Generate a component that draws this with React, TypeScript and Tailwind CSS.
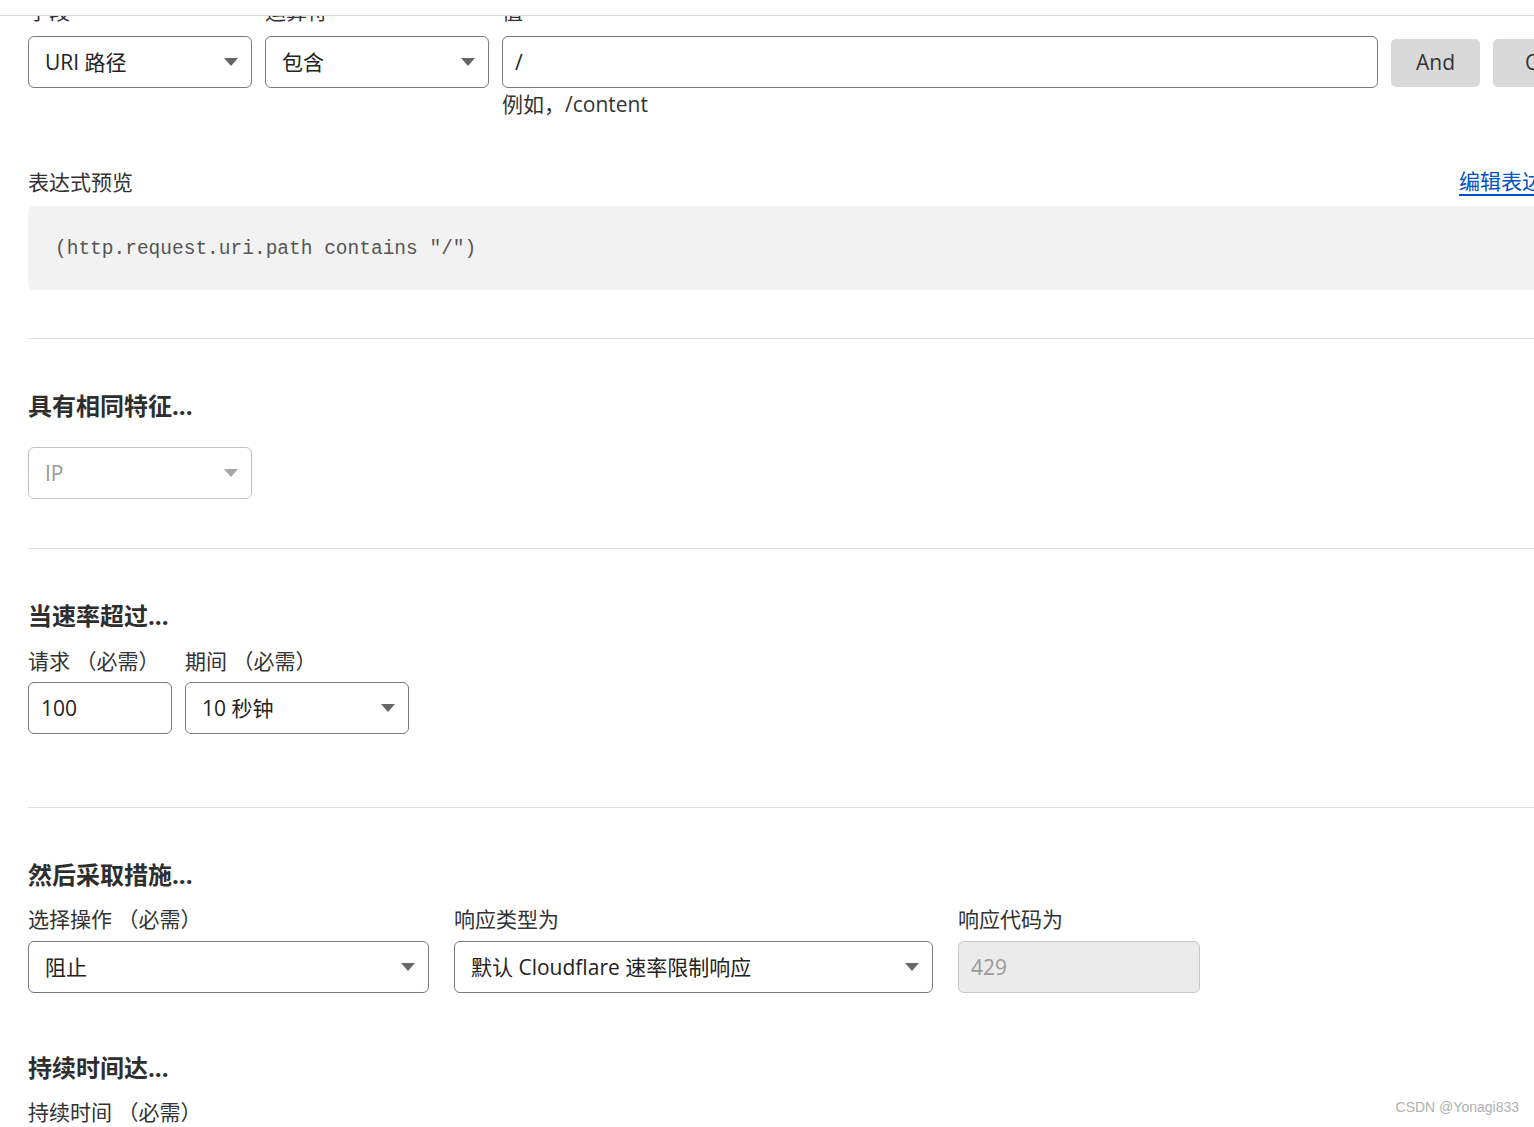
import type { ReactNode } from 'react';

const font = 'font-["Open_Sans","Noto_Sans_CJK_SC",sans-serif]';

function Caret({ muted }: { muted?: boolean }) {
  return (
    <svg width="14" height="8" viewBox="0 0 14 8" className="shrink-0">
      <path d="M0 0 L14 0 L7 8 Z" fill={muted ? '#a6a6a6' : '#666666'} />
    </svg>
  );
}

function Select({ value, width, disabled }: { value: string; width: string; disabled?: boolean }) {
  return (
    <div
      className={`${width} flex h-[52px] shrink-0 items-center justify-between rounded-[6px] border bg-white pl-[16px] pr-[13px] ${
        disabled ? 'border-[#c2c2c2] text-[#9a9a9a]' : 'border-[#7a7a7a] text-[#222]'
      }`}
    >
      <span className="whitespace-nowrap text-[21px] leading-[28px]">{value}</span>
      <Caret muted={disabled} />
    </div>
  );
}

function Input({ value, width, disabled }: { value: string; width: string; disabled?: boolean }) {
  return (
    <div
      className={`${width} flex h-[52px] shrink-0 items-center rounded-[6px] border pl-[12px] ${
        disabled ? 'border-[#c8c8c8] bg-[#ebebeb] text-[#9a9a9a]' : 'border-[#7a7a7a] bg-white text-[#222]'
      }`}
    >
      <span className="whitespace-nowrap text-[21px] leading-[28px]">{value}</span>
    </div>
  );
}

function Label({ children }: { children: ReactNode }) {
  return <div className="whitespace-nowrap text-[21px] leading-[28px] text-[#333]">{children}</div>;
}

function Heading({ children, className = '' }: { children: ReactNode; className?: string }) {
  return <h3 className={`text-[24px] font-bold leading-[30px] text-[#2e2e2e] ${className}`}>{children}</h3>;
}

function Rule({ className = '' }: { className?: string }) {
  return <div className={`h-px w-[1600px] bg-[#dedede] ${className}`} />;
}

export default function App() {
  return (
    <div className={`relative h-[1127px] w-[1534px] overflow-hidden bg-white ${font}`}>
      {/* sticky header edge covering the scrolled-away labels */}
      <div className="absolute inset-x-0 top-0 z-10 h-[16px] border-b border-[#d9d9d9] bg-white" />

      <div className="-mt-[3px] pl-[28px]">
        <div className="flex gap-[13px]">
          <div className="flex flex-col gap-[11px]">
            <Label>字段</Label>
            <Select value="URI 路径" width="w-[224px]" />
          </div>
          <div className="flex flex-col gap-[11px]">
            <Label>运算符</Label>
            <Select value="包含" width="w-[224px]" />
          </div>
          <div className="flex flex-col">
            <Label>值</Label>
            <div className="mt-[11px]">
              <Input value="/" width="w-[876px]" />
            </div>
            <div className="mt-[2px] text-[21px] leading-[28px] text-[#333]">例如，/content</div>
          </div>
          <div className="flex flex-col pt-[42px]">
            <button className="h-[48px] w-[89px] rounded-[5px] bg-[#d9d9d9] text-[21px] text-[#333]">And</button>
          </div>
          <div className="flex flex-col pt-[42px]">
            <button className="h-[48px] w-[89px] rounded-[5px] bg-[#d9d9d9] text-[21px] text-[#333]">Or</button>
          </div>
        </div>

        <div className="mt-[50px] flex w-[1600px] items-end justify-between">
          <Label>表达式预览</Label>
          <a className="mr-[64px] whitespace-nowrap border-b-2 border-[#0051c3] text-[21px] leading-[26px] text-[#0051c3]">
            编辑表达式
          </a>
        </div>
        <div className="mt-[10px] flex h-[84px] w-[1600px] items-center rounded-[6px] bg-[#f2f2f2] pl-[27px] pt-[3px]">
          <code className='font-["Liberation_Mono",monospace] text-[19.5px] text-[#555]'>
            (http.request.uri.path contains "/")
          </code>
        </div>

        <Rule className="mt-[48px]" />

        <Heading className="mt-[52px]">具有相同特征...</Heading>
        <div className="mt-[26px]">
          <Select value="IP" width="w-[224px]" disabled />
        </div>

        <Rule className="mt-[49px]" />

        <Heading className="mt-[52px]">当速率超过...</Heading>
        <div className="mt-[16px] flex gap-[13px]">
          <div className="flex flex-col gap-[7px]">
            <Label>请求 （必需）</Label>
            <Input value="100" width="w-[144px]" />
          </div>
          <div className="flex flex-col gap-[7px]">
            <Label>期间 （必需）</Label>
            <Select value="10 秒钟" width="w-[224px]" />
          </div>
        </div>

        <Rule className="mt-[73px]" />

        <Heading className="mt-[52px]">然后采取措施...</Heading>
        <div className="mt-[15px] flex gap-[25px]">
          <div className="flex flex-col gap-[8px]">
            <Label>选择操作 （必需）</Label>
            <Select value="阻止" width="w-[401px]" />
          </div>
          <div className="flex flex-col gap-[8px]">
            <Label>响应类型为</Label>
            <Select value="默认 Cloudflare 速率限制响应" width="w-[479px]" />
          </div>
          <div className="flex flex-col gap-[8px]">
            <Label>响应代码为</Label>
            <Input value="429" width="w-[242px]" disabled />
          </div>
        </div>

        <Heading className="mt-[60px]">持续时间达...</Heading>
        <div className="mt-[15px]">
          <Label>持续时间 （必需）</Label>
        </div>
      </div>

      <div className='absolute bottom-[9px] right-[15px] font-["Liberation_Sans",sans-serif] text-[14px] text-[#b0b0b0]'>
        CSDN @Yonagi833
      </div>
    </div>
  );
}
